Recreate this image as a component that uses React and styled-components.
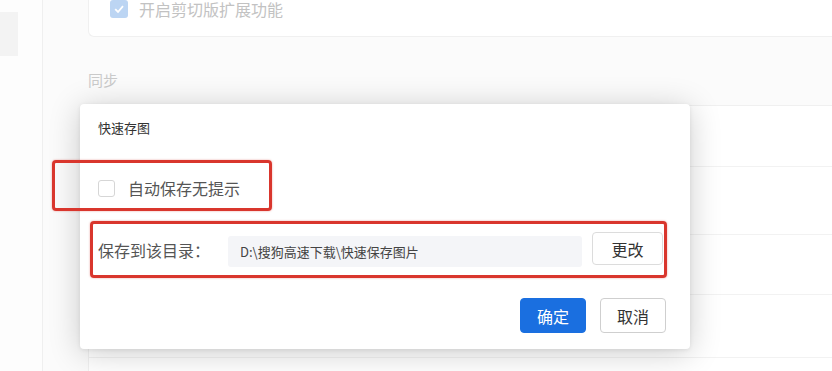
import React from "react";
import styled, { createGlobalStyle } from "styled-components";

const GlobalStyle = createGlobalStyle`
  html, body {
    margin: 0;
    padding: 0;
    background: #fbfbfb;
    font-family: "Noto Sans CJK SC", "Noto Sans", "Liberation Sans", sans-serif;
  }
  * { box-sizing: border-box; }
`;

const Page = styled.div`
  position: relative;
  display: flex;
  width: 832px;
  height: 371px;
  overflow: hidden;
  background: #fbfbfb;
`;

const Sidebar = styled.div`
  width: 43px;
  flex-shrink: 0;
  background: #fdfdfd;
  border-right: 1px solid #efefef;
  padding-top: 12px;
`;

const SideItem = styled.div`
  width: 18px;
  height: 44px;
  background: #f3f3f3;
`;

const Main = styled.div`
  flex: 1;
  padding-left: 45px;
  display: flex;
  flex-direction: column;
  & > * { flex-shrink: 0; }
`;

const TopCard = styled.div`
  margin-top: -20px;
  height: 57px;
  background: #fff;
  border: 1px solid #f0f0f0;
  border-right: none;
  border-radius: 6px 0 0 6px;
  display: flex;
  align-items: center;
  padding: 0 0 0 21px;
  gap: 11px;
`;

const FadedCheck = styled.span`
  width: 18px;
  height: 18px;
  border-radius: 3px;
  background: #bcd5f3;
  display: flex;
  align-items: center;
  justify-content: center;
`;

const FadedText = styled.span`
  font-size: 16px;
  line-height: 20px;
  color: #c2c2c2;
`;

const SectionTitle = styled.div`
  margin-top: 32px;
  font-size: 15px;
  line-height: 22px;
  color: #cacaca;
`;

const ListCard = styled.div`
  margin-top: 14px;
  background: #fff;
  border: 1px solid #f0f0f0;
  border-right: none;
  border-radius: 6px 0 0 6px;
  display: flex;
  flex-direction: column;
`;

const ListRow = styled.div`
  height: ${(p) => p.h}px;
  flex-shrink: 0;
  border-bottom: 1px solid #f2f2f2;
`;

const Dialog = styled.div`
  position: absolute;
  left: 80px;
  top: 104px;
  width: 610px;
  height: 245px;
  background: #fff;
  border-radius: 4px;
  box-shadow: 0 4px 32px rgba(0, 0, 0, 0.2), 0 1px 4px rgba(0, 0, 0, 0.08);
  padding: 0 24px 0 18px;
  display: flex;
  flex-direction: column;
  color: #333;
`;

const Title = styled.div`
  margin-top: 13px;
  font-size: 13px;
  line-height: 22px;
  color: #333;
`;

const Marked = styled.div`
  border: 3px solid #d9362d;
  border-radius: 4px;
  box-shadow: 0 0 2px rgba(217, 54, 45, 0.5);
`;

const CheckRow = styled(Marked)`
  margin-top: 21px;
  margin-left: -46px;
  width: 220px;
  height: 51px;
  display: flex;
  align-items: center;
  padding: 5px 0 0 43px;
  gap: 13px;
`;

const Box = styled.span`
  width: 17px;
  height: 17px;
  border: 1px solid #d6d6d6;
  border-radius: 3px;
  background: #fff;
`;

const CheckLabel = styled.span`
  font-size: 16px;
  line-height: 22px;
  color: #555;
`;

const DirRow = styled(Marked)`
  margin-top: 10px;
  margin-left: -8px;
  width: 577px;
  height: 57px;
  display: flex;
  align-items: center;
  padding: 0 0 0 5px;
`;

const DirLabel = styled.span`
  width: 130px;
  font-size: 16px;
  line-height: 22px;
  color: #555;
`;

const PathField = styled.div`
  width: 354px;
  height: 31px;
  margin-top: 4px;
  background: #f4f5f8;
  border-radius: 3px;
  display: flex;
  align-items: center;
  padding-left: 12px;
  font-size: 13px;
  color: #444;
`;

const Button = styled.button`
  font-family: inherit;
  width: ${(p) => p.w || 66}px;
  height: ${(p) => p.h || 35}px;
  font-size: 16px;
  border-radius: 4px;
  border: 1px solid ${(p) => (p.primary ? "#1a6fe0" : "#cfcfcf")};
  background: ${(p) => (p.primary ? "#1a6fe0" : "#fff")};
  color: ${(p) => (p.primary ? "#fff" : "#333")};
  padding: 0;
  cursor: pointer;
`;

const ChangeButton = styled(Button)`
  margin-left: 10px;
  margin-top: -2px;
  border-color: #dcdcdc;
`;

const Footer = styled.div`
  margin-top: 20px;
  display: flex;
  justify-content: flex-end;
  gap: 14px;
`;

export default function App() {
  return (
    <Page>
      <GlobalStyle />
      <Sidebar>
        <SideItem />
      </Sidebar>
      <Main>
        <TopCard>
          <FadedCheck>
            <svg width="12" height="12" viewBox="0 0 12 12">
              <path d="M2.2 6.2 L5 9 L10 3.2" fill="none" stroke="#fff" strokeWidth="1.8" />
            </svg>
          </FadedCheck>
          <FadedText>开启剪切版扩展功能</FadedText>
        </TopCard>
        <SectionTitle>同步</SectionTitle>
        <ListCard>
          <ListRow h={61} />
          <ListRow h={68} />
          <ListRow h={60} />
          <ListRow h={63} />
          <ListRow h={60} />
        </ListCard>
      </Main>
      <Dialog>
        <Title>快速存图</Title>
        <CheckRow>
          <Box />
          <CheckLabel>自动保存无提示</CheckLabel>
        </CheckRow>
        <DirRow>
          <DirLabel>保存到该目录：</DirLabel>
          <PathField>D:\搜狗高速下载\快速保存图片</PathField>
          <ChangeButton w={71} h={33}>更改</ChangeButton>
        </DirRow>
        <Footer>
          <Button primary>确定</Button>
          <Button>取消</Button>
        </Footer>
      </Dialog>
    </Page>
  );
}
